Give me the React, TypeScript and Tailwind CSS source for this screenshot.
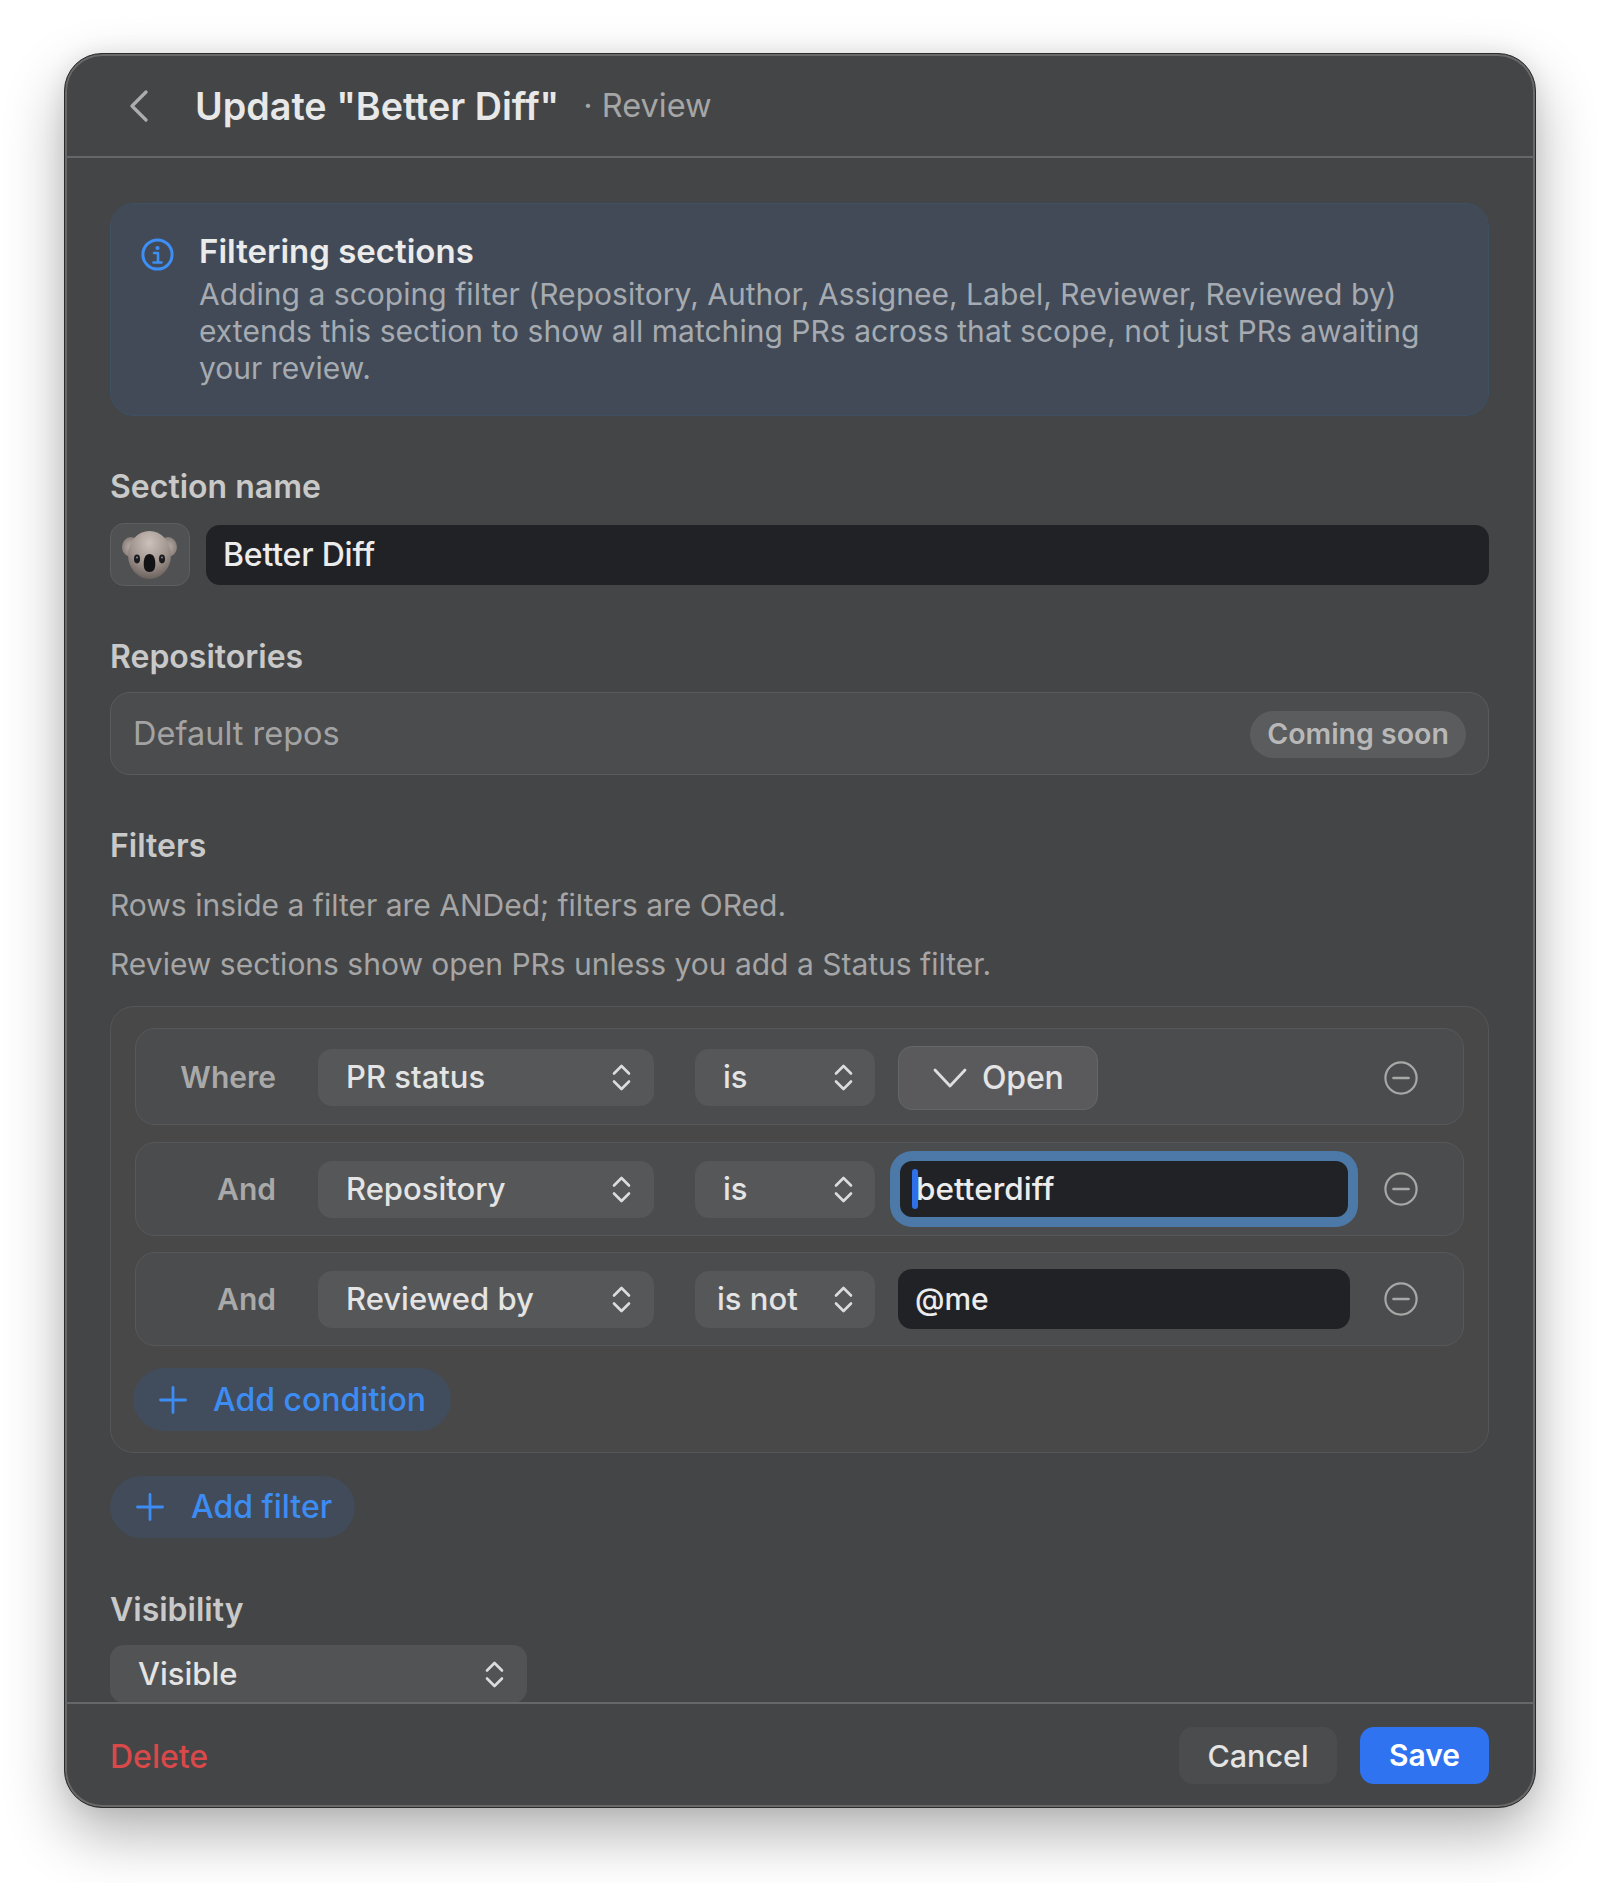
import { ReactNode } from 'react'

function UpDown() {
  return (
    <svg width="19" height="27" viewBox="0 0 19 27" fill="none" stroke="#dcdcdc" strokeWidth="2.6" strokeLinecap="round" strokeLinejoin="round">
      <path d="M2 9.5 9.5 2 17 9.5" />
      <path d="M2 17.5 9.5 25 17 17.5" />
    </svg>
  )
}

function Plus() {
  return (
    <svg width="28" height="28" viewBox="0 0 28 28" fill="none" stroke="#3d8cf3" strokeWidth="2.8" strokeLinecap="round">
      <path d="M14 1.5v25M1.5 14h25" />
    </svg>
  )
}

function MinusCircle() {
  return (
    <svg width="34" height="34" viewBox="0 0 34 34" fill="none" stroke="#a8a8a8" strokeWidth="2.2" strokeLinecap="round">
      <circle cx="17" cy="17" r="15.6" />
      <path d="M9.5 17h15" strokeWidth="2.6" />
    </svg>
  )
}

function Koala() {
  return (
    <svg width="60" height="50" viewBox="0 0 60 50">
      <defs>
        <radialGradient id="head" cx="50%" cy="25%" r="75%">
          <stop offset="0%" stopColor="#cdc2bb" />
          <stop offset="60%" stopColor="#a0948e" />
          <stop offset="100%" stopColor="#6c625d" />
        </radialGradient>
        <radialGradient id="ear" cx="50%" cy="50%" r="60%">
          <stop offset="0%" stopColor="#bdb1ab" />
          <stop offset="100%" stopColor="#7f7570" />
        </radialGradient>
      </defs>
      <ellipse cx="11" cy="17" rx="9" ry="10" fill="url(#ear)" />
      <ellipse cx="48" cy="17" rx="9" ry="10" fill="url(#ear)" />
      <ellipse cx="29.5" cy="25" rx="21.5" ry="24" fill="url(#head)" />
      <ellipse cx="17" cy="29" rx="3" ry="4.4" fill="#1b1b1e" />
      <ellipse cx="42" cy="29" rx="3" ry="4.4" fill="#1b1b1e" />
      <circle cx="17" cy="27.5" r="0.9" fill="#8f959d" />
      <circle cx="42" cy="27.5" r="0.9" fill="#8f959d" />
      <path d="M29.5 24c4 0 5.8 4 5.8 10 0 5-1.8 8-5.8 8s-5.8-3-5.8-8c0-6 1.8-10 5.8-10Z" fill="#131315" />
    </svg>
  )
}

function FieldLabel({ children, className }: { children: ReactNode; className: string }) {
  return <div className={`h-[36px] text-[32px] leading-[38px] font-semibold text-[#c9c9c9] ${className}`}>{children}</div>
}

function Select({ label, width, textLeft = 'pl-[28px]', chevronRight = 'pr-[23px]' }: { label: string; width: string; textLeft?: string; chevronRight?: string }) {
  return (
    <div className={`flex h-[57px] shrink-0 items-center justify-between rounded-[14px] bg-[#565758] text-[31px] font-medium text-[#e4e4e4] ${width} ${textLeft} ${chevronRight}`}>
      <span>{label}</span>
      <UpDown />
    </div>
  )
}

function FilterRow({ label, height, children }: { label: string; height: string; children: ReactNode }) {
  return (
    <div className={`flex items-center rounded-[20px] border border-[#575859] bg-[#4b4c4d] ${height}`}>
      <div className="w-[140px] shrink-0 text-right text-[30px] font-semibold text-[#a9a9a9]">{label}</div>
      {children}
      <div className="mr-[45px] ml-auto flex">
        <MinusCircle />
      </div>
    </div>
  )
}

export default function App() {
  return (
    <div className="h-[1883px] overflow-hidden bg-white pt-[53px] font-['Inter','Noto_Sans',sans-serif]">
      <div className="mx-[64px] flex h-[1755px] w-[1472px] flex-col overflow-hidden rounded-[38px] border border-[#2c2c2d] bg-[#444546] shadow-[0_26px_60px_rgba(0,0,0,0.3),0_0_22px_rgba(0,0,0,0.08),inset_0_0_0_2px_#69696a]">
        {/* Header */}
        <div className="flex h-[104px] shrink-0 items-center border-b-2 border-[#666768] pt-[2px] pl-[64px]">
          <svg width="20" height="32" viewBox="0 0 20 32" fill="none" stroke="#adadad" strokeWidth="3.2" strokeLinecap="round" strokeLinejoin="round">
            <path d="M17 2 3 16l14 14" />
          </svg>
          <h1 className="ml-[46px] text-[37.7px] font-semibold text-[#e8e8e8]">Update "Better Diff"</h1>
          <span className="ml-[24px] text-[32.5px] text-[#a6a6a6]">· Review</span>
        </div>

        {/* Body */}
        <div className="min-h-0 flex-1 overflow-hidden pt-[45px] pr-[46px] pl-[45px]">
          <div className="flex h-[213px] rounded-[24px] border border-[#3f5065] bg-[#414a56] pt-[28px] pl-[30px]">
            <svg className="mt-[6px] shrink-0" width="33" height="33" viewBox="0 0 33 33" fill="none">
              <circle cx="16.5" cy="16.5" r="14.6" stroke="#3d8ff5" strokeWidth="3" />
              <circle cx="16.5" cy="10" r="2.1" fill="#3d8ff5" />
              <path d="M13 15h4v9M12.5 24.5h8" stroke="#3d8ff5" strokeWidth="2.6" strokeLinecap="round" strokeLinejoin="round" />
            </svg>
            <div className="ml-[25px] pr-[40px]">
              <div className="text-[33px] leading-[38px] font-semibold text-[#ebebeb]">Filtering sections</div>
              <p className="mt-[6px] text-[30px] leading-[37px] tracking-[0.03px] text-[#a6abb2]">
                Adding a scoping filter (Repository, Author, Assignee, Label, Reviewer, Reviewed by) extends this section to show all matching PRs across that scope, not just PRs awaiting your review.
              </p>
            </div>
          </div>

          <FieldLabel className="mt-[52px]">Section name</FieldLabel>
          <div className="mt-[19px] flex h-[63px] items-center gap-[16px]">
            <div className="flex h-[63px] w-[80px] shrink-0 items-center justify-center rounded-[14px] border border-[#5d5e5f] bg-[#505152]">
              <Koala />
            </div>
            <div className="flex h-[60px] flex-1 items-center rounded-[14px] bg-[#212226] pl-[17px] text-[32px] font-medium tracking-[-0.2px] text-[#ececec]">Better Diff</div>
          </div>

          <FieldLabel className="mt-[52px]">Repositories</FieldLabel>
          <div className="mt-[18px] flex h-[83px] items-center justify-between rounded-[20px] border border-[#5a5b5c] bg-[#4b4c4e] pr-[22px] pl-[22px]">
            <span className="mt-[2px] text-[32.5px] text-[#a3a3a3]">Default repos</span>
            <span className="mt-[1px] flex h-[47px] w-[216px] items-center justify-center rounded-full bg-[#5b5c5e] pt-[1px] text-[28.5px] font-semibold text-[#b8b8b8]">Coming soon</span>
          </div>

          <FieldLabel className="mt-[52px]">Filters</FieldLabel>
          <p className="mt-[24px] text-[30px] leading-[36px] text-[#a6a6a6]">Rows inside a filter are ANDed; filters are ORed.</p>
          <p className="mt-[23px] text-[30px] leading-[36px] text-[#a6a6a6]">Review sections show open PRs unless you add a Status filter.</p>

          <div className="mt-[24px] flex h-[447px] flex-col rounded-[24px] border border-[#555657] bg-[#484849] px-[24px] pt-[21px]">
            <FilterRow label="Where" height="h-[97px] pt-[2px]">
              <div className="ml-[42px] flex items-center">
                <Select label="PR status" width="w-[336px]" />
                <div className="ml-[41px]">
                  <Select label="is" width="w-[180px]" chevronRight="pr-[22px]" />
                </div>
                <div className="ml-[23px] flex h-[64px] w-[200px] items-center rounded-[14px] border border-[#656667] bg-[#5a5a5c] pl-[34px] text-[32px] font-medium tracking-[-0.2px] text-[#e4e4e4]">
                  <svg width="34" height="20" viewBox="0 0 34 20" fill="none" stroke="#dedede" strokeWidth="2.8" strokeLinecap="round" strokeLinejoin="round">
                    <path d="M2 2 17 18 32 2" />
                  </svg>
                  <span className="ml-[15px]">Open</span>
                </div>
              </div>
            </FilterRow>
            <div className="mt-[17px]">
              <FilterRow label="And" height="h-[94px]">
                <div className="ml-[42px] flex items-center">
                  <Select label="Repository" width="w-[336px]" />
                  <div className="ml-[41px]">
                    <Select label="is" width="w-[180px]" chevronRight="pr-[22px]" />
                  </div>
                  <div className="relative ml-[23px] flex h-[60px] w-[452px] items-center rounded-[14px] border-2 border-[#4c79a8] bg-[#212226] pl-[16px] text-[31.5px] font-medium text-[#ececec] shadow-[0_0_0_8px_#4c79a8]">
                    <span className="absolute top-[8px] left-[12px] h-[40px] w-[6px] rounded-[3px] bg-[#2f6fe8]" />
                    betterdiff
                  </div>
                </div>
              </FilterRow>
            </div>
            <div className="mt-[16px]">
              <FilterRow label="And" height="h-[94px]">
                <div className="ml-[42px] flex items-center">
                  <Select label="Reviewed by" width="w-[336px]" />
                  <div className="ml-[41px]">
                    <Select label="is not" width="w-[180px]" textLeft="pl-[22px]" chevronRight="pr-[22px]" />
                  </div>
                  <div className="ml-[23px] flex h-[60px] w-[452px] items-center rounded-[14px] bg-[#212226] pl-[17px] text-[30px] font-medium text-[#ececec]">@me</div>
                </div>
              </FilterRow>
            </div>
            <div className="mt-[22px] -ml-[2px] flex h-[63px] w-[318px] items-center rounded-full bg-[#414d5c] pl-[26px]">
              <Plus />
              <span className="ml-[26px] text-[32px] font-medium text-[#3d8cf3]">Add condition</span>
            </div>
          </div>

          <div className="mt-[23px] flex h-[62px] w-[245px] items-center rounded-full bg-[#414b59] pl-[26px]">
            <Plus />
            <span className="ml-[27px] text-[32px] font-medium text-[#3d8cf3]">Add filter</span>
          </div>

          <FieldLabel className="mt-[53px]">Visibility</FieldLabel>
          <div className="mt-[18px] flex h-[58px] w-[417px] items-center justify-between rounded-[14px] bg-[#525354] pr-[23px] pl-[28px] text-[31px] font-medium text-[#e4e4e4]">
            <span>Visible</span>
            <UpDown />
          </div>
        </div>

        {/* Footer */}
        <div className="flex h-[105px] shrink-0 items-center justify-between border-t-2 border-[#666768] pr-[46px] pl-[45px]">
          <span className="mt-[2px] text-[32px] font-medium text-[#d9494a]">Delete</span>
          <div className="flex gap-[23px]">
            <button className="h-[57px] w-[158px] rounded-[14px] bg-[#4b4c4e] text-[30.5px] font-medium text-[#e4e4e4]">Cancel</button>
            <button className="h-[57px] w-[129px] rounded-[14px] bg-[#2f73f0] text-[30px] font-semibold text-white">Save</button>
          </div>
        </div>
      </div>
    </div>
  )
}
